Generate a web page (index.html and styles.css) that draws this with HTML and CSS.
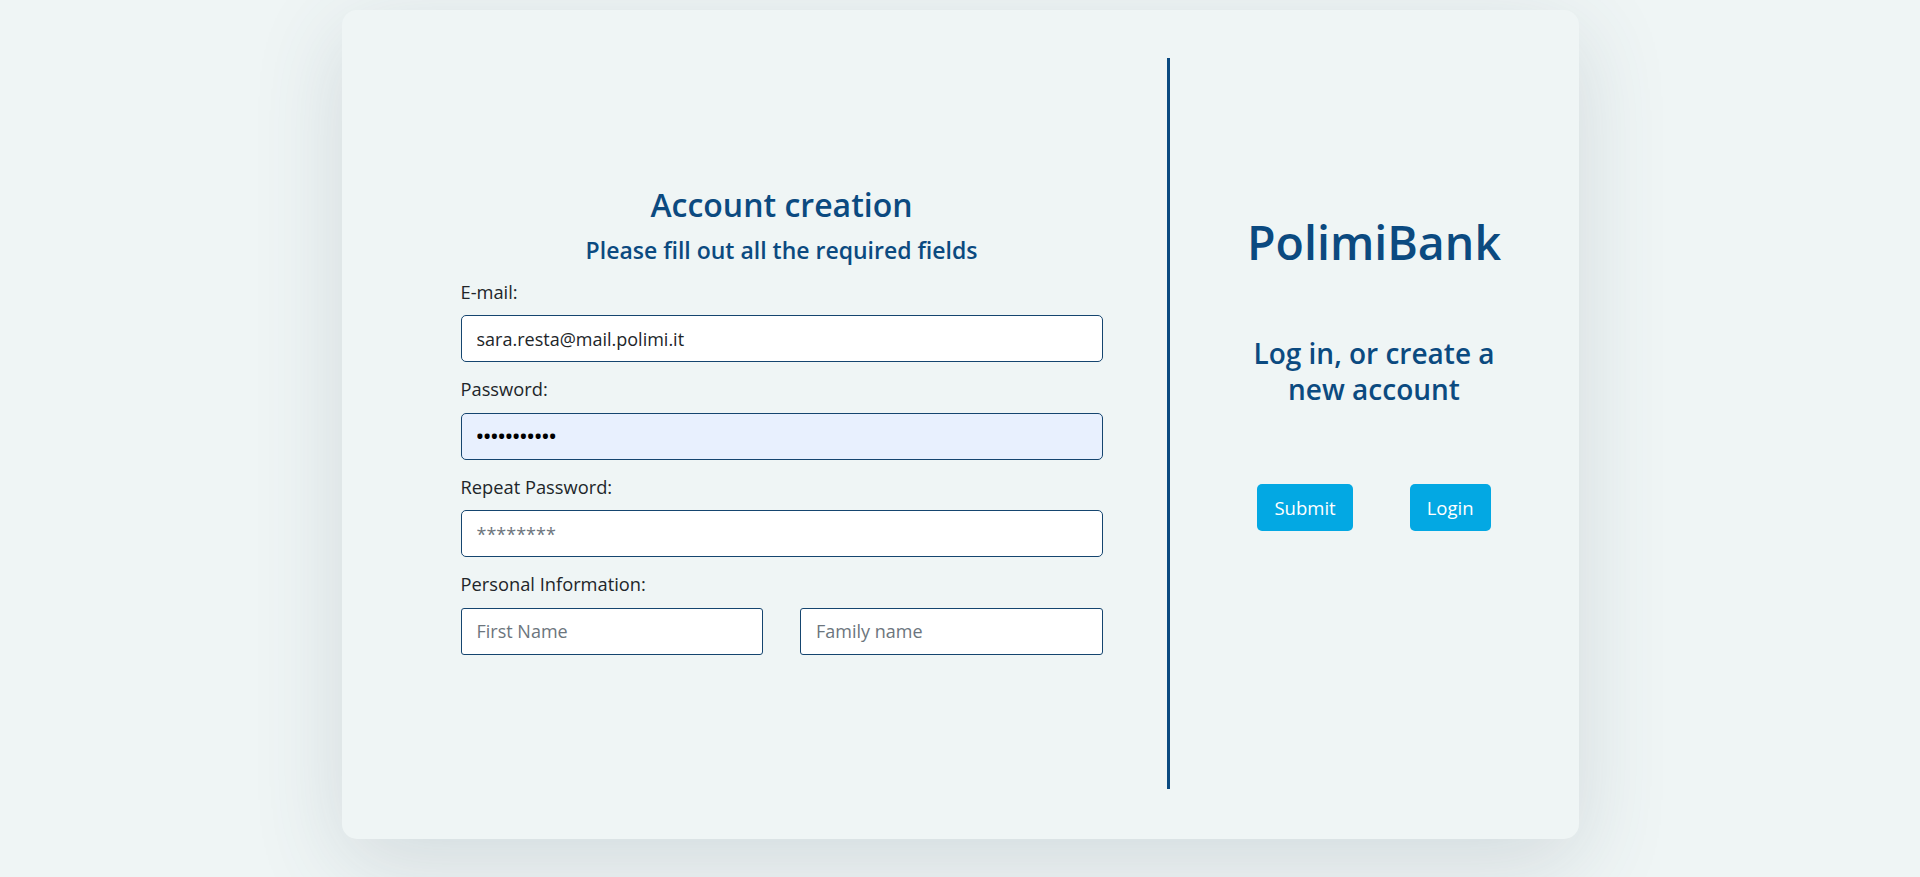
FILE: index.html
```html
<!DOCTYPE html>
<html lang="en">
<head>
<meta charset="utf-8">
<title>PolimiBank - Account creation</title>
<link rel="stylesheet" href="styles.css">
</head>
<body>
<main class="card">
  <section class="signup">
    <form class="signup-form">
      <h3 class="title">Account creation</h3>
      <h5 class="subtitle">Please fill out all the required fields</h5>
      <label class="field-label" for="email">E-mail:</label>
      <input class="field" id="email" type="email" value="sara.resta@mail.polimi.it">
      <label class="field-label" for="pwd">Password:</label>
      <input class="field field-autofill" id="pwd" type="password" value="abcdefghijk">
      <label class="field-label" for="pwd2">Repeat Password:</label>
      <input class="field" id="pwd2" type="text" placeholder="********">
      <label class="field-label">Personal Information:</label>
      <div class="name-row">
        <input class="field field-square" type="text" placeholder="First Name">
        <input class="field field-square" type="text" placeholder="Family name">
      </div>
    </form>
  </section>
  <div class="divider"></div>
  <section class="welcome">
    <h1 class="brand">PolimiBank</h1>
    <h4 class="tagline">Log in, or create a new account</h4>
    <div class="actions">
      <button class="btn" type="button">Submit</button>
      <button class="btn" type="button">Login</button>
    </div>
  </section>
</main>
</body>
</html>
```
FILE: styles.css
```css
* {
  box-sizing: border-box;
}

html, body {
  margin: 0;
  padding: 0;
}

body {
  height: 877px;
  overflow: hidden;
  background: #eff5f5;
  font-family: "Open Sans", "Noto Sans", sans-serif;
  color: #212529;
}

.card {
  width: 1237px;
  height: 829px;
  margin: 10px auto 0;
  background: #eff5f5;
  border-radius: 15px;
  box-shadow: 0 24px 90px rgba(60, 80, 100, 0.16);
  display: flex;
}

.signup {
  width: 825px;
  padding: 176px 0 0 119px;
}

.signup-form {
  width: 642px;
  display: flex;
  flex-direction: column;
}

.title {
  margin: 0;
  font-size: 32px;
  line-height: 38.4px;
  font-weight: 600;
  color: #0b4a80;
  text-align: center;
}

.subtitle {
  margin: 12.5px 0 0;
  font-size: 23px;
  line-height: 27.6px;
  font-weight: 600;
  color: #0b4a80;
  text-align: center;
}

.field-label {
  display: block;
  margin: 13px 0 10.5px;
  font-size: 18.3px;
  line-height: 27px;
  color: #212529;
}

.field {
  display: block;
  width: 100%;
  height: 47px;
  padding: 0 15px;
  border: 1px solid #15456f;
  border-radius: 5px;
  background: #ffffff;
  font-family: "Open Sans", "Noto Sans", sans-serif;
  font-size: 18px;
  color: #212529;
  outline: none;
}

.field::placeholder {
  color: #6c757d;
}

.field-autofill {
  background: #e8f0fe;
  color: #000000;
  font-weight: 700;
  letter-spacing: 0.5px;
}

.field-square {
  border-radius: 3px;
}

.name-row {
  display: flex;
  gap: 37px;
}

.name-row .field {
  flex: 1;
  min-width: 0;
}

.divider {
  width: 3px;
  height: 731px;
  margin-top: 48px;
  background: #0b4a80;
}

.welcome {
  flex: 1;
  padding-top: 204px;
  text-align: center;
}

.brand {
  margin: 0;
  font-size: 46.5px;
  line-height: 57.6px;
  font-weight: 600;
  color: #0b4a80;
}

.tagline {
  max-width: 262px;
  margin: 63px auto 0;
  font-size: 28px;
  line-height: 36px;
  font-weight: 600;
  color: #0b4a80;
}

.actions {
  margin-top: 77px;
  display: flex;
  justify-content: center;
  gap: 57px;
}

.btn {
  height: 47px;
  padding: 0 17px;
  border: none;
  border-radius: 5px;
  background: #03a8e3;
  color: #ffffff;
  font-family: "Open Sans", "Noto Sans", sans-serif;
  font-size: 18.5px;
  cursor: pointer;
}
```
